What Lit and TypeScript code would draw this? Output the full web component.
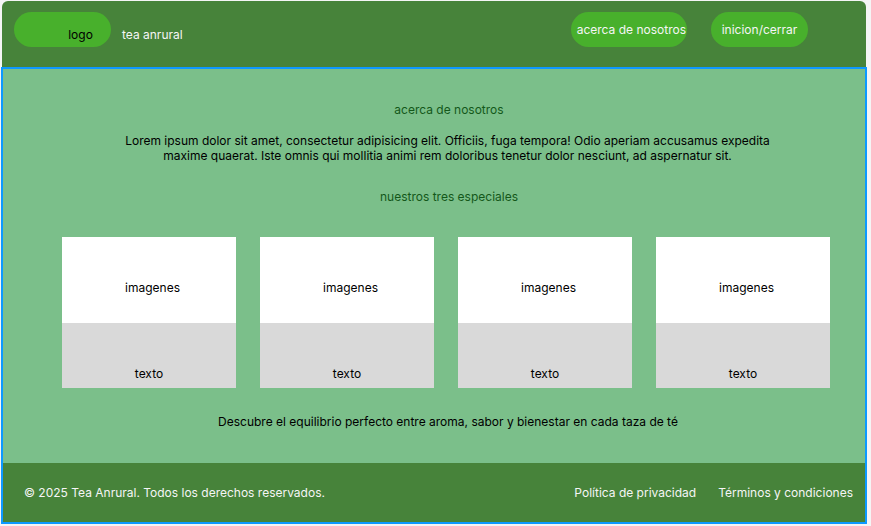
import { LitElement, html, css } from "lit";
import { customElement, property } from "lit/decorators.js";

@customElement("tea-card")
class TeaCard extends LitElement {
  @property() image = "";
  @property() caption = "";

  static styles = css`
    :host {
      display: flex;
      flex-direction: column;
      min-width: 0;
      text-align: center;
    }
    .image {
      box-sizing: border-box;
      min-height: 86px;
      padding: 43px 0 0 7px;
      background: #ffffff;
    }
    .caption {
      box-sizing: border-box;
      min-height: 65px;
      padding-top: 43px;
      background: #d9d9d9;
    }
  `;

  render() {
    return html`
      <div class="image">${this.image}</div>
      <div class="caption">${this.caption}</div>
    `;
  }
}

@customElement("app-root")
class AppRoot extends LitElement {
  static styles = css`
    :host {
      display: block;
      box-sizing: border-box;
      min-height: 100vh;
      padding: 1px 4px 2px 1px;
      background: #f5f5f5;
      color: #000000;
      font: 400 12px/15px Inter, sans-serif;
    }
    .header {
      display: flex;
      align-items: flex-start;
      box-sizing: border-box;
      min-height: 66px;
      margin: 0 1px;
      padding: 11px 58px 0 12px;
      border-radius: 6px 6px 0 0;
      background: #47833a;
      color: #f5f5f5;
    }
    .pill {
      box-sizing: border-box;
      height: 35px;
      min-width: 97px;
      margin: 0;
      padding: 0;
      border: 0;
      border-radius: 18px;
      background: #48b02c;
      color: #f5f5f5;
      font: inherit;
      text-align: center;
      white-space: nowrap;
      cursor: pointer;
    }
    .logo {
      padding: 15px 18px 0 54px;
      color: #000000;
      text-decoration: none;
    }
    .brand {
      padding: 15px 0 0 11px;
    }
    .nav {
      display: flex;
      gap: 24px;
      margin-left: auto;
    }
    .about {
      padding: 0 1px 0 6px;
    }
    .frame {
      border: 2px solid #0d99ff;
      background: #7bbf8a;
    }
    .content {
      padding: 33px 35px 34px 59px;
      text-align: center;
    }
    .title {
      margin: 0;
      padding-left: 6px;
      color: #14581a;
      font: inherit;
    }
    .intro {
      max-width: 670px;
      margin: 16px auto 26px;
      padding-left: 3px;
    }
    .cards {
      display: grid;
      grid-template-columns: repeat(4, minmax(0, 1fr));
      gap: 24px;
      margin: 33px 0 26px;
    }
    .slogan {
      margin: 0;
      padding-left: 4px;
    }
    .footer {
      display: flex;
      justify-content: space-between;
      gap: 22px;
      padding: 22px 12px 22px 21px;
      background: #47833a;
      color: #f5f5f5;
    }
    .links {
      display: flex;
      gap: 22px;
    }
    .link {
      color: inherit;
      text-decoration: none;
    }
  `;

  private cards = Array.from({ length: 4 }, () => ({
    image: "imagenes",
    caption: "texto",
  }));

  render() {
    return html`
      <header class="header">
        <a class="pill logo" href="#">logo</a>
        <span class="brand">tea anrural</span>
        <nav class="nav">
          <button class="pill about" type="button">acerca de nosotros</button>
          <button class="pill" type="button">inicion/cerrar</button>
        </nav>
      </header>
      <div class="frame">
        <main class="content">
          <h1 class="title">acerca de nosotros</h1>
          <p class="intro">
            Lorem ipsum dolor sit amet, consectetur adipisicing elit. Officiis,
            fuga tempora! Odio aperiam accusamus expedita maxime quaerat. Iste
            omnis qui mollitia animi rem doloribus tenetur dolor nesciunt, ad
            aspernatur sit.
          </p>
          <h2 class="title">nuestros tres especiales</h2>
          <section class="cards">
            ${this.cards.map(
              (card) => html`<tea-card
                .image=${card.image}
                .caption=${card.caption}
              ></tea-card>`
            )}
          </section>
          <p class="slogan">
            Descubre el equilibrio perfecto entre aroma, sabor y bienestar en
            cada taza de té
          </p>
        </main>
        <footer class="footer">
          <span>© 2025 Tea Anrural. Todos los derechos reservados.</span>
          <nav class="links">
            <a class="link" href="#">Política de privacidad</a>
            <a class="link" href="#">Términos y condiciones</a>
          </nav>
        </footer>
      </div>
    `;
  }
}
